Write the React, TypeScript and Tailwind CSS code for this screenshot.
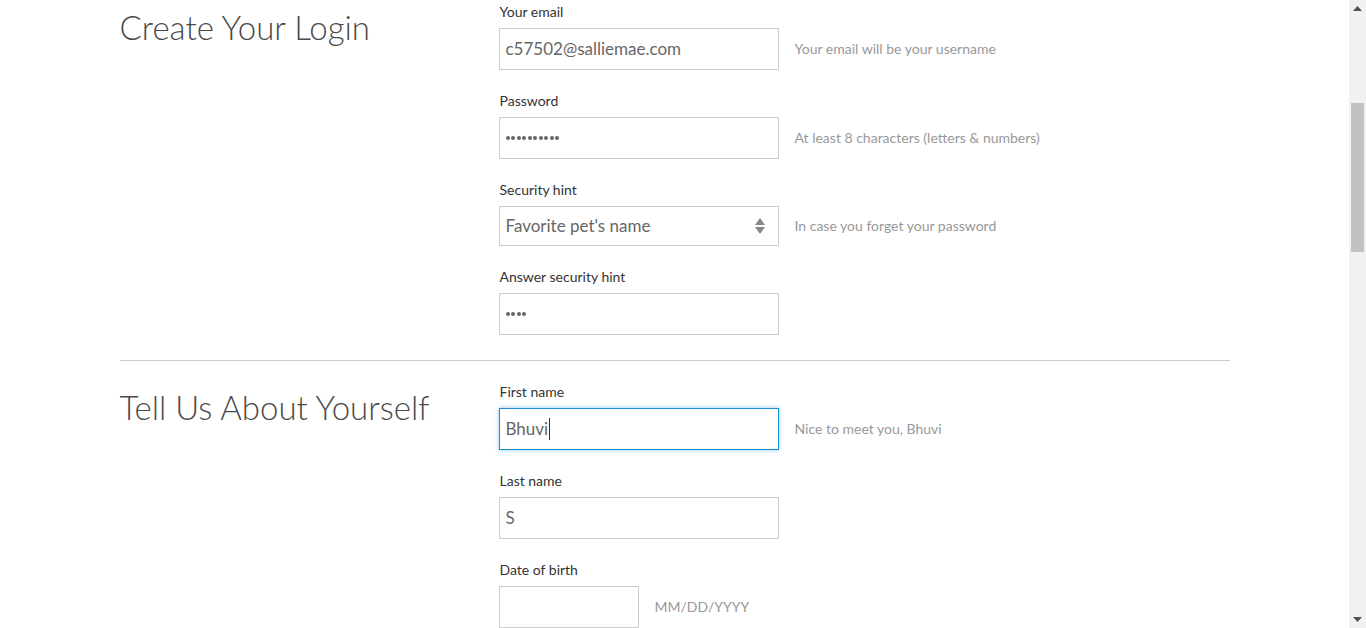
import React from "react";

const body = { fontFamily: "Lato, 'Open Sans', sans-serif" } as React.CSSProperties;
const head = { fontFamily: "Lato, 'DejaVu Sans', sans-serif" } as React.CSSProperties;

function Label({ children }: { children: React.ReactNode }) {
  return <div className="text-[14px] leading-[20px] text-[#333] mb-[6px] pl-[1px]">{children}</div>;
}

function Dots({ n }: { n: number }) {
  return (
    <div className="flex gap-[1.5px]">
      {Array.from({ length: n }).map((_, i) => (
        <span key={i} className="block w-[4px] h-[4px] rounded-full bg-[#666]" />
      ))}
    </div>
  );
}

function Field({
  label,
  hint,
  children,
  focused,
  width = "w-[280px]",
  height = "h-[42px]",
  gap = "mb-[21px]",
}: {
  label: string;
  hint?: string;
  children?: React.ReactNode;
  focused?: boolean;
  width?: string;
  height?: string;
  gap?: string;
}) {
  return (
    <div className={gap}>
      <Label>{label}</Label>
      <div className="flex items-center">
        <div
          className={
            focused
              ? `${width} ${height} border border-[#1a8fd0] shadow-[0_0_4px_rgba(60,160,230,0.6)] flex items-center px-[6px] text-[17px] text-[#666] bg-white`
              : `${width} ${height} border border-[#ccc] flex items-center px-[6px] text-[17px] text-[#666] bg-white`
          }
        >
          {children}
        </div>
        {hint && <div className="ml-[16px] text-[14px] leading-[18px] text-[#999] -mt-[1px]">{hint}</div>}
      </div>
    </div>
  );
}

export default function App() {
  return (
    <div className="h-[628px] w-[1366px] overflow-hidden flex bg-white" style={body}>
      <div className="flex-1 overflow-hidden">
        <div className="w-[1110px] mx-auto pt-[2px]">
          <div className="flex">
            <div className="w-[379px]">
              <h1 className="text-[33px] leading-[50px] font-light text-[#4a4a4a]" style={head}>
                Create Your Login
              </h1>
            </div>
            <div className="flex-1">
              <Field label="Your email" hint="Your email will be your username">
                c57502@salliemae.com
              </Field>
              <Field label="Password" hint="At least 8 characters (letters & numbers)">
                <Dots n={10} />
              </Field>
              <Field label="Security hint" hint="In case you forget your password" height="h-[40px]">
                <div className="flex-1">Favorite pet's name</div>
                <svg width="12" height="18" viewBox="0 0 12 18" className="mr-[6px]">
                  <path d="M6 1 L11 8 L1 8 Z" fill="#888" />
                  <path d="M1 10 L11 10 L6 17 Z" fill="#888" />
                </svg>
              </Field>
              <Field label="Answer security hint" gap="mb-[25px]">
                <Dots n={4} />
              </Field>
            </div>
          </div>
          <div className="border-t border-[#ccc]" />
          <div className="flex pt-[21px]">
            <div className="w-[379px]">
              <h1 className="text-[33px] leading-[50px] font-light text-[#4a4a4a]" style={head}>
                Tell Us About Yourself
              </h1>
            </div>
            <div className="flex-1">
              <Field label="First name" hint="Nice to meet you, Bhuvi" focused>
                Bhuvi
                <span className="inline-block w-px h-[22px] bg-[#333] ml-[1px]" />
              </Field>
              <Field label="Last name">S</Field>
              <Field label="Date of birth" hint="MM/DD/YYYY" width="w-[140px]" />
            </div>
          </div>
        </div>
      </div>
      <div className="w-[17px] h-[628px] bg-[#f1f1f1] flex flex-col items-center shrink-0">
        <svg width="9" height="5" viewBox="0 0 9 5" className="mt-[6px]">
          <path d="M4.5 0 L9 5 L0 5 Z" fill="#505050" />
        </svg>
        <div className="mt-[92px] w-[13px] h-[149px] bg-[#c1c1c1]" />
        <div className="flex-1" />
        <svg width="9" height="5" viewBox="0 0 9 5" className="mb-[6px]">
          <path d="M0 0 L9 0 L4.5 5 Z" fill="#505050" />
        </svg>
      </div>
    </div>
  );
}
